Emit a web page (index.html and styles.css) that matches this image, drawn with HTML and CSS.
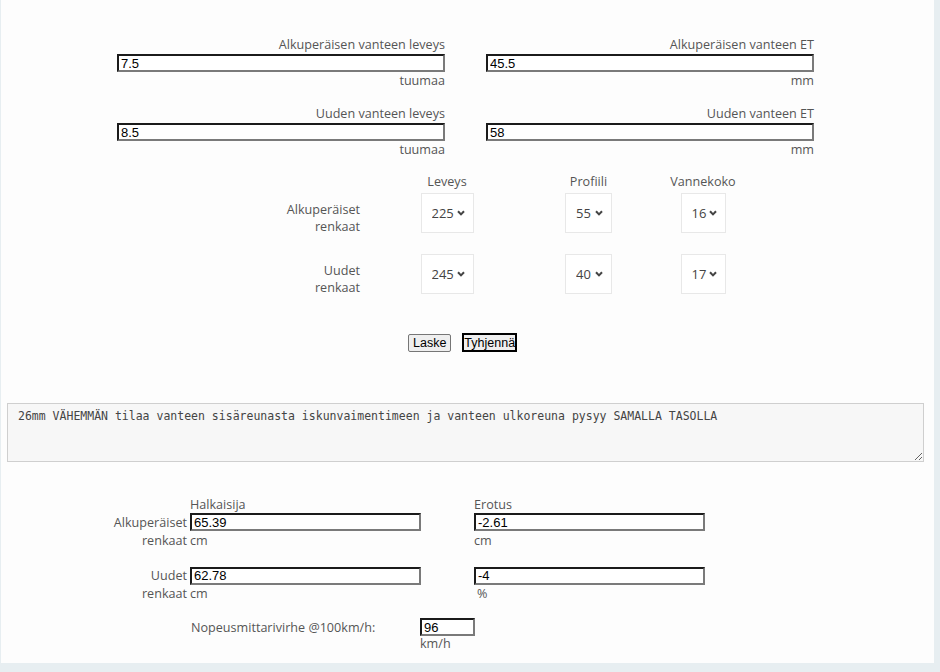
FILE: index.html
```html
<!DOCTYPE html>
<html lang="fi">
<head>
<meta charset="utf-8">
<title>Vannelaskuri</title>
<link rel="stylesheet" href="styles.css">
</head>
<body>
<div class="page">
  <section class="rims">
    <div class="rim-col">
      <div class="field">
        <label class="lbl">Alkuperäisen vanteen leveys</label>
        <input class="txt" type="text" value="7.5">
        <span class="unit">tuumaa</span>
      </div>
      <div class="field">
        <label class="lbl">Uuden vanteen leveys</label>
        <input class="txt" type="text" value="8.5">
        <span class="unit">tuumaa</span>
      </div>
    </div>
    <div class="rim-col">
      <div class="field">
        <label class="lbl">Alkuperäisen vanteen ET</label>
        <input class="txt" type="text" value="45.5">
        <span class="unit">mm</span>
      </div>
      <div class="field">
        <label class="lbl">Uuden vanteen ET</label>
        <input class="txt" type="text" value="58">
        <span class="unit">mm</span>
      </div>
    </div>
  </section>

  <section class="tires">
    <div class="th"></div>
    <div class="th">Leveys</div>
    <div class="th">Profiili</div>
    <div class="th">Vannekoko</div>

    <div class="row-lbl r1">Alkuperäiset<br>renkaat</div>
    <div class="cell r1"><span class="sel"><select class="sel-wide"><option>225</option></select><svg class="chev" viewBox="0 0 8 6" width="8" height="6"><path d="M1 1.2 L4 4.4 L7 1.2"/></svg></span></div>
    <div class="cell r1"><span class="sel"><select class="sel-mid"><option>55</option></select><svg class="chev" viewBox="0 0 8 6" width="8" height="6"><path d="M1 1.2 L4 4.4 L7 1.2"/></svg></span></div>
    <div class="cell r1"><span class="sel"><select class="sel-narrow"><option>16</option></select><svg class="chev" viewBox="0 0 8 6" width="8" height="6"><path d="M1 1.2 L4 4.4 L7 1.2"/></svg></span></div>

    <div class="row-lbl r2">Uudet<br>renkaat</div>
    <div class="cell r2"><span class="sel"><select class="sel-wide"><option>245</option></select><svg class="chev" viewBox="0 0 8 6" width="8" height="6"><path d="M1 1.2 L4 4.4 L7 1.2"/></svg></span></div>
    <div class="cell r2"><span class="sel"><select class="sel-mid"><option>40</option></select><svg class="chev" viewBox="0 0 8 6" width="8" height="6"><path d="M1 1.2 L4 4.4 L7 1.2"/></svg></span></div>
    <div class="cell r2"><span class="sel"><select class="sel-narrow"><option>17</option></select><svg class="chev" viewBox="0 0 8 6" width="8" height="6"><path d="M1 1.2 L4 4.4 L7 1.2"/></svg></span></div>
  </section>

  <div class="buttons">
    <button class="btn" type="button">Laske</button>
    <button class="btn btn-focus" type="button">Tyhjennä</button>
  </div>

  <textarea class="result">26mm VÄHEMMÄN tilaa vanteen sisäreunasta iskunvaimentimeen ja vanteen ulkoreuna pysyy SAMALLA TASOLLA</textarea>

  <section class="results">
    <div></div>
    <div class="col-head">Halkaisija</div>
    <div class="col-head">Erotus</div>

    <div class="rl">Alkuperäiset</div>
    <div><input class="txt out" type="text" value="65.39"></div>
    <div><input class="txt out" type="text" value="-2.61"></div>
    <div class="rl">renkaat</div>
    <div class="u">cm</div>
    <div class="u">cm</div>

    <div class="rl gap">Uudet</div>
    <div class="gap"><input class="txt out" type="text" value="62.78"></div>
    <div class="gap"><input class="txt out" type="text" value="-4"></div>
    <div class="rl">renkaat</div>
    <div class="u">cm</div>
    <div class="u pct">%</div>
  </section>

  <div class="speed">
    <span class="speed-lbl">Nopeusmittarivirhe @100km/h:</span>
    <div class="speed-val">
      <input class="txt small" type="text" value="96">
      <span class="u2">km/h</span>
    </div>
  </div>
</div>
</body>
</html>
```

FILE: styles.css
```css
html, body {
  margin: 0;
  padding: 0;
}
body {
  background: #e7eef1;
  font-family: "Open Sans", "DejaVu Sans", sans-serif;
  font-size: 12.6px;
  color: #555;
}
.page {
  width: 933px;
  height: 663px;
  margin-left: 1px;
  background: #fdfdfd;
  box-sizing: border-box;
  padding-top: 36px;
  overflow: hidden;
}

/* Rim inputs */
.rims {
  display: flex;
  gap: 41px;
  padding-left: 116px;
}
.rim-col {
  display: flex;
  flex-direction: column;
  gap: 15px;
  width: 328px;
}
.field {
  display: flex;
  flex-direction: column;
  align-items: stretch;
  text-align: right;
}
.lbl, .unit {
  display: block;
  line-height: 18px;
  height: 18px;
}
.txt {
  box-sizing: border-box;
  height: 18px;
  margin: 0;
  padding: 0 2px;
  border: 2px solid;
  border-color: #1b1b1b #7a7a7a #7a7a7a #1b1b1b;
  background: #fff;
  font-family: "Liberation Sans", Arial, sans-serif;
  font-size: 13px;
  line-height: 14px;
  color: #000;
  text-align: left;
  outline: none;
}
.field .txt {
  width: 328px;
}

/* Tire selects */
.tires {
  margin-top: 14px;
  margin-left: 259px;
  display: grid;
  grid-template-columns: 100px 174px 109px 120px;
  grid-template-rows: auto auto auto;
  line-height: 18px;
}
.th {
  text-align: center;
  height: 18px;
}
.row-lbl {
  text-align: right;
  padding-top: 8px;
  line-height: 17px;
  align-self: start;
  margin-bottom: -4px;
}
.cell {
  display: flex;
  justify-content: center;
}
.r1 { margin-top: 2px; }
.r2 { margin-top: 21px; }
.sel {
  position: relative;
  display: inline-flex;
}
.sel select {
  -webkit-appearance: none;
  appearance: none;
  box-sizing: border-box;
  height: 40px;
  margin: 0;
  padding: 0 0 0 10px;
  border: 1px solid #e8e8e8;
  border-radius: 0;
  background: #fff;
  font-family: "Open Sans", "DejaVu Sans", sans-serif;
  font-size: 13px;
  color: #444;
  outline: none;
}
.sel-wide { width: 53px; }
.sel-mid { width: 47px; }
.sel-narrow { width: 45px; }
.chev {
  position: absolute;
  right: 9px;
  top: 17px;
  fill: none;
  stroke: #444;
  stroke-width: 2;
  pointer-events: none;
}

/* Buttons */
.buttons {
  margin-top: 39px;
  display: flex;
  align-items: center;
  gap: 11px;
  padding-left: 407px;
}
.btn {
  box-sizing: border-box;
  height: 18px;
  margin: 0;
  padding: 0 4px;
  border: 1px solid #767676;
  border-radius: 2px;
  background: #efefef;
  font-family: "Liberation Sans", Arial, sans-serif;
  font-size: 12.5px;
  line-height: 14px;
  color: #000;
}
.btn-focus {
  border: 2px solid #000;
  border-radius: 0;
  padding: 0;
  height: 19px;
}

/* Result text */
.result {
  display: block;
  box-sizing: border-box;
  margin: 51px 0 0 6px;
  width: 917px;
  height: 59px;
  padding: 5px 10px;
  border: 1px solid #cfcfcf;
  background: #f7f7f7;
  font-family: "DejaVu Sans Mono", "Liberation Mono", monospace;
  font-size: 11.5px;
  color: #444;
  resize: vertical;
  outline: none;
}

/* Results table */
.results {
  margin-top: 34px;
  display: grid;
  grid-template-columns: 186px 281px 230px;
  column-gap: 3px;
  align-items: baseline;
}
.col-head {
  line-height: 17px;
}
.rl {
  text-align: right;
  line-height: 18px;
}
.out {
  width: 231px;
}
.u {
  line-height: 13px;
}
.pct { padding-left: 3px; padding-top: 2px; }
.gap { margin-top: 17px; }

.speed {
  margin-top: 15px;
  display: flex;
  align-items: baseline;
  padding-left: 190px;
}
.speed-lbl {
  width: 229px;
  line-height: 18px;
}
.speed-val {
  display: flex;
  flex-direction: column;
}
.small {
  width: 55px;
}
.u2 {
  line-height: 16px;
}
```
